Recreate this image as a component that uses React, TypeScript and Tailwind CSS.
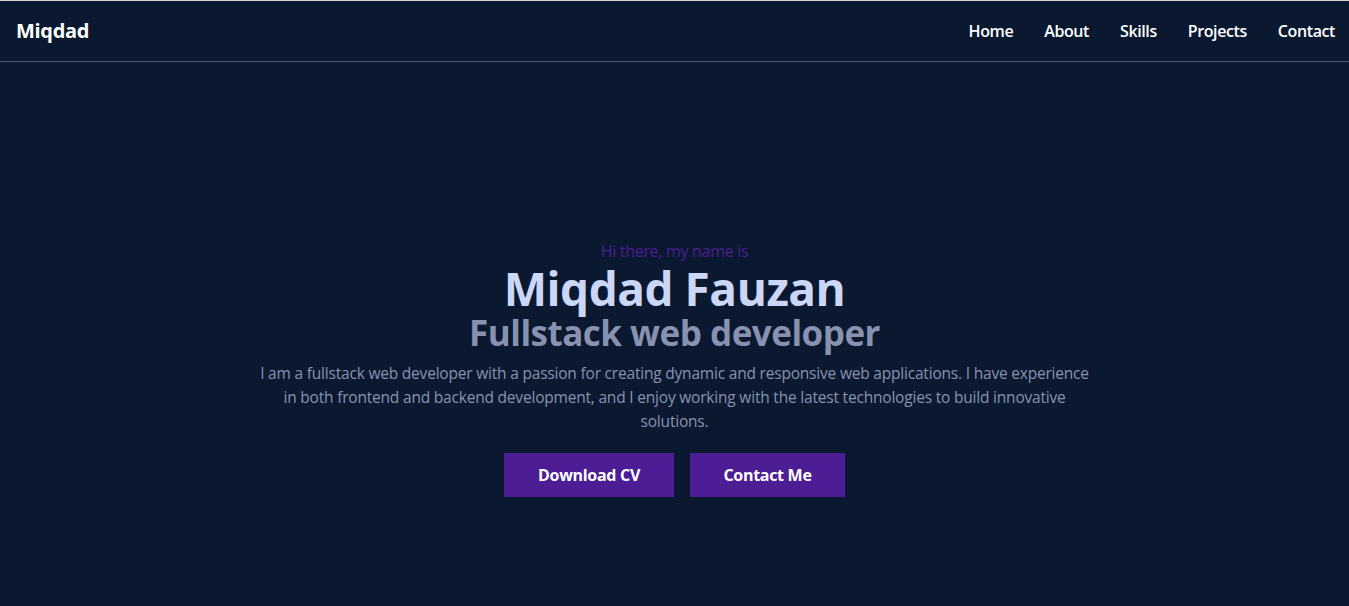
export default function App() {
  const links = ['Home', 'About', 'Skills', 'Projects', 'Contact'];

  return (
    <div
      className="min-h-screen bg-[#0a192f]"
      style={{ fontFamily: '"Open Sans", "Noto Sans", sans-serif' }}
    >
      {/* Navbar */}
      <nav className="flex h-[62px] items-center justify-between border-t border-b border-t-[#d4d4d4] border-b-[#4a5568] pl-4 pr-[14px]">
        <h1 className="text-[20px] font-bold tracking-[-0.3px] text-white">Miqdad</h1>
        <ul className="flex items-center gap-[31px]">
          {links.map((l) => (
            <li key={l} className="text-[16px] font-semibold tracking-[-0.4px] text-white">
              {l}
            </li>
          ))}
        </ul>
      </nav>

      {/* Hero */}
      <section className="flex h-[606px] flex-col items-center justify-center px-4 pt-[6px] text-center">
        <p className="text-[16px] leading-[24px] tracking-[-0.3px] text-[#4c1d95]">Hi there, my name is</p>
        <h2 className="text-[46px] font-bold leading-[50px] tracking-[-0.5px] text-[#ccd6f6]">
          Miqdad Fauzan
        </h2>
        <h3 className="text-[35px] font-bold leading-[40px] tracking-[-0.5px] text-[#8892b0]">
          Fullstack web developer
        </h3>
        <p className="mt-[8px] max-w-[838px] text-[15.5px] leading-[24px] tracking-[-0.2px] text-[#8892b0]">
          I am a fullstack web developer with a passion for creating dynamic and responsive web
          applications. I have experience in both frontend and backend development, and I enjoy
          working with the latest technologies to build innovative solutions.
        </p>
        <div className="mt-[20px] flex gap-4">
          <button className="h-[44px] w-[170px] bg-[#4c1d95] text-[16px] font-bold tracking-[-0.3px] text-white">
            Download CV
          </button>
          <button className="h-[44px] w-[155px] bg-[#4c1d95] text-[16px] font-bold tracking-[-0.3px] text-white">
            Contact Me
          </button>
        </div>
      </section>
    </div>
  );
}
